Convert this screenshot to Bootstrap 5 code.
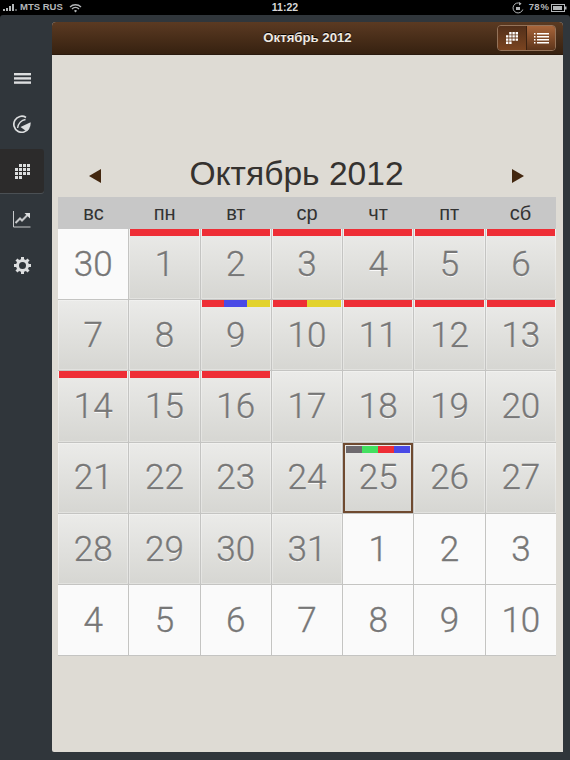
<!DOCTYPE html>
<html lang="ru">
<head>
  <meta charset="UTF-8">
  <meta name="viewport" content="width=device-width, initial-scale=1.0">
  <title>Календарь</title>
  <link href="https://cdn.jsdelivr.net/npm/bootstrap@5.3.0/dist/css/bootstrap.min.css" rel="stylesheet">
  <style>
    html, body { height: 760px; overflow: hidden; }
    body { background: #000; font-family: "Liberation Sans", Arial, sans-serif; }
    .status-bar { height: 15px; padding: 0 3px; color: #b4b7b9; font-size: 9.5px; font-weight: 700; background: #000; }
    .status-side { width: 200px; }
    .status-carrier { margin-left: 2px; }
    .status-wifi { margin-left: 6px; }
    .status-time { color: #d8d8d8; font-size: 10.5px; }
    .status-pct { word-spacing: -1.5px; margin: 0 2px 0 5px; }
    .app-shell { height: 745px; background: #30363b; border-radius: 3px 3px 0 0; }
    .side-menu { width: 52px; padding-top: 40px; }
    .side-item { width: 44px; height: 46px; color: #dcdedf; }
    .side-item.is-active { background: #2c2b2b; border-radius: 0 3px 3px 0; box-shadow: 0 1px 0 #4b5054; height: 44px; margin: 2px 0 3px; }
    .main-panel { width: 511px; height: 730px; margin-top: 7px; background: #dedbd4; border-radius: 4px 4px 0 2px; overflow: hidden; }
    .panel-head { height: 33px; background: linear-gradient(#5b3a22, #362110); border-bottom: 1px solid #2a1a0e; position: relative; }
    .panel-title { color: #efe9e2; font-size: 13.2px; font-weight: 700; text-shadow: 0 -1px 0 #000; }
    .view-switch { position: absolute; right: 7px; top: 3px; width: 59px; height: 26px; border: 1px solid #94735a; border-radius: 4px; overflow: hidden; }
    .view-btn { flex: 1; }
    .view-btn.is-on { background: linear-gradient(#53301a, #7a4420); border-right: 1px solid #3a2110; }
    .view-btn.is-off { background: linear-gradient(#a9653a, #5d351b); }
    .month-row { height: 51px; margin-top: 91px; padding: 0 39px 0 37px; }
    .month-name { font-size: 33.6px; line-height: 1; color: #35322f; padding-right: 20px; margin-top: 4px; }
    .month-arrow { width: 0; height: 0; border-top: 7px solid transparent; border-bottom: 7px solid transparent; margin-top: 8px; }
    .month-arrow.back { border-right: 12px solid #43270f; }
    .month-arrow.next { border-left: 12px solid #43270f; }
    .cal-wrap { margin: 0 7px 0 6px; }
    .week-head { display: grid; grid-template-columns: repeat(7, 1fr); height: 32px; background: #c7c7c7; color: #333; font-size: 20px; }
    .cal-grid { display: grid; grid-template-columns: repeat(7, 1fr); grid-auto-rows: 70.2px; gap: 1px; background: #c4c4c2; border-bottom: 1px solid #c4c4c2; }
    .day { position: relative; color: #777; font-family: Roboto, "Liberation Sans", sans-serif; font-weight: 300; font-size: 35px; -webkit-text-stroke: .35px #777; text-shadow: 0 1px 0 #fff; background: linear-gradient(#ebebe9, #d6d6d2); padding-top: 2px; box-shadow: inset 0 0 0 1px rgba(255, 255, 255, .3); }
    .day.is-out { background: #fafafa; }
    .day.is-today { outline: 2px solid #6f4a30; outline-offset: -2px; z-index: 1; }
    .day-bar { position: absolute; left: 1px; right: 1px; top: 0; height: 7px; }
    .is-today .day-bar { left: 3px; right: 3px; top: 3px; }
    .day-bar i { flex: 1; }
    .c-red { background: #ee2e36; }
    .c-blue { background: #4a4ae6; }
    .c-yellow { background: #e2d22c; }
    .c-green { background: #43e060; }
    .c-gray { background: #6e6a6e; }
  </style>
</head>
<body>

  <div class="status-bar d-flex justify-content-between align-items-center">
    <div class="status-side d-flex align-items-center">
      <svg width="15" height="9" viewBox="0 0 15 9" fill="#b4b7b9"><rect x="0" y="6" width="2" height="2"/><rect x="3" y="5" width="2" height="3"/><rect x="6" y="3" width="2" height="5"/><rect x="9" y="1" width="2" height="7"/><rect x="12" y="6" width="2" height="2" opacity=".5"/></svg>
      <span class="status-carrier">MTS RUS</span>
      <svg class="status-wifi" width="13" height="10" viewBox="0 0 13 10" fill="none" stroke="#b4b7b9" stroke-width="1.4"><path d="M1 4a8 8 0 0 1 11 0M3 6a5 5 0 0 1 7 0"/><path d="M6.5 9.5 5 7.7a2.3 2.3 0 0 1 3 0z" fill="#b4b7b9" stroke="none"/></svg>
    </div>
    <span class="status-time">11:22</span>
    <div class="status-side d-flex align-items-center justify-content-end">
      <svg width="12" height="12" viewBox="0 0 12 12" fill="none" stroke="#b4b7b9" stroke-width="1"><path d="M10.8 7.5A5 5 0 1 1 8.5 1.6"/><path d="M7 0v3.4l2.6-1.7z" fill="#b4b7b9" stroke="none"/><rect x="4" y="5" width="4" height="3" fill="#b4b7b9" stroke="none"/></svg>
      <span class="status-pct">78 %</span>
      <svg width="16" height="8" viewBox="0 0 16 8"><rect x=".5" y=".5" width="13" height="7" fill="none" stroke="#b4b7b9"/><rect x="2" y="2" width="9" height="4" fill="#b4b7b9"/><rect x="14" y="2.5" width="1.5" height="3" fill="#b4b7b9"/></svg>
    </div>
  </div>

  <div class="app-shell d-flex">
    <nav class="side-menu flex-shrink-0">
      <div class="side-item d-flex align-items-center justify-content-center">
        <svg width="17" height="11" viewBox="0 0 17 11" fill="currentColor"><rect width="17" height="2.4"/><rect y="4.2" width="17" height="2.4"/><rect y="8.4" width="17" height="2.4"/></svg>
      </div>
      <div class="side-item d-flex align-items-center justify-content-center">
        <svg width="18" height="18" viewBox="0 0 18 18" fill="none" stroke="currentColor" stroke-width="1.7"><path d="M13 2.4A8 8 0 1 0 15.8 13.2"/><path d="M4.6 13C5 8.5 8.5 5 12.5 4.5" stroke-width="1.3"/><path d="M7.5 12 17.6 7.3A9 9 0 0 1 13 16Z" fill="currentColor" stroke="none"/></svg>
      </div>
      <div class="side-item is-active d-flex align-items-center justify-content-center">
        <svg width="15" height="15" viewBox="0 0 15 15" fill="#dcdedf" shape-rendering="crispEdges"><path d="M4 0h3v3H4zM8 0h3v3H8zM12 0h3v3h-3zM0 4h3v3H0zM4 4h3v3H4zM8 4h3v3H8zM12 4h3v3h-3zM0 8h3v3H0zM4 8h3v3H4zM8 8h3v3H8zM12 8h3v3h-3zM0 12h3v3H0zM4 12h3v3H4z"/></svg>
      </div>
      <div class="side-item d-flex align-items-center justify-content-center">
        <svg width="18" height="17" viewBox="0 0 18 17" fill="none" stroke="#c7c9cb"><path d="M.5 0v16h17" stroke-width="1"/><path d="M2.5 12 7 7.5l2 2L14.5 4" stroke-width="2"/><path d="M11.5 2H17v5.5z" fill="#dcdedf" stroke="none"/></svg>
      </div>
      <div class="side-item d-flex align-items-center justify-content-center">
        <svg width="17" height="17" viewBox="0 0 17 17"><circle cx="8.5" cy="8.5" r="5" fill="none" stroke="#dcdedf" stroke-width="3"/><g stroke="#dcdedf" stroke-width="3"><path d="M8.5 0v3M8.5 14v3M0 8.5h3M14 8.5h3M2.5 2.5l2 2M12.5 12.5l2 2M2.5 14.5l2-2M12.5 4.5l2-2"/></g></svg>
      </div>
    </nav>

    <main class="main-panel">
      <header class="panel-head d-flex align-items-center justify-content-center">
        <span class="panel-title">Октябрь 2012</span>
        <div class="view-switch d-flex">
          <div class="view-btn is-on d-flex align-items-center justify-content-center">
            <svg width="12" height="12" viewBox="0 0 15 15" fill="#fff"><path d="M4 0h3v3H4zM8 0h3v3H8zM12 0h3v3h-3zM0 4h3v3H0zM4 4h3v3H4zM8 4h3v3H8zM12 4h3v3h-3zM0 8h3v3H0zM4 8h3v3H4zM8 8h3v3H8zM12 8h3v3h-3zM0 12h3v3H0zM4 12h3v3H4z"/></svg>
          </div>
          <div class="view-btn is-off d-flex align-items-center justify-content-center">
            <svg width="15" height="11" viewBox="0 0 15 11" fill="#fff"><path d="M0 0h1.5v1.5H0zM3 0h12v1.5H3zM0 3h1.5v1.5H0zM3 3h12v1.5H3zM0 6h1.5v1.5H0zM3 6h12v1.5H3zM0 9h1.5v1.5H0zM3 9h12v1.5H3z"/></svg>
          </div>
        </div>
      </header>

      <div class="month-row d-flex align-items-center justify-content-between">
        <span class="month-arrow back"></span>
        <span class="month-name">Октябрь 2012</span>
        <span class="month-arrow next"></span>
      </div>

      <div class="cal-wrap">
        <div class="week-head text-center align-items-center">
          <span>вс</span><span>пн</span><span>вт</span><span>ср</span><span>чт</span><span>пт</span><span>сб</span>
        </div>
        <div class="cal-grid">
          <div class="day is-out d-flex align-items-center justify-content-center">30</div>
          <div class="day d-flex align-items-center justify-content-center"><span class="day-bar d-flex"><i class="c-red"></i></span>1</div>
          <div class="day d-flex align-items-center justify-content-center"><span class="day-bar d-flex"><i class="c-red"></i></span>2</div>
          <div class="day d-flex align-items-center justify-content-center"><span class="day-bar d-flex"><i class="c-red"></i></span>3</div>
          <div class="day d-flex align-items-center justify-content-center"><span class="day-bar d-flex"><i class="c-red"></i></span>4</div>
          <div class="day d-flex align-items-center justify-content-center"><span class="day-bar d-flex"><i class="c-red"></i></span>5</div>
          <div class="day d-flex align-items-center justify-content-center"><span class="day-bar d-flex"><i class="c-red"></i></span>6</div>

          <div class="day d-flex align-items-center justify-content-center">7</div>
          <div class="day d-flex align-items-center justify-content-center">8</div>
          <div class="day d-flex align-items-center justify-content-center"><span class="day-bar d-flex"><i class="c-red"></i><i class="c-blue"></i><i class="c-yellow"></i></span>9</div>
          <div class="day d-flex align-items-center justify-content-center"><span class="day-bar d-flex"><i class="c-red"></i><i class="c-yellow"></i></span>10</div>
          <div class="day d-flex align-items-center justify-content-center"><span class="day-bar d-flex"><i class="c-red"></i></span>11</div>
          <div class="day d-flex align-items-center justify-content-center"><span class="day-bar d-flex"><i class="c-red"></i></span>12</div>
          <div class="day d-flex align-items-center justify-content-center"><span class="day-bar d-flex"><i class="c-red"></i></span>13</div>

          <div class="day d-flex align-items-center justify-content-center"><span class="day-bar d-flex"><i class="c-red"></i></span>14</div>
          <div class="day d-flex align-items-center justify-content-center"><span class="day-bar d-flex"><i class="c-red"></i></span>15</div>
          <div class="day d-flex align-items-center justify-content-center"><span class="day-bar d-flex"><i class="c-red"></i></span>16</div>
          <div class="day d-flex align-items-center justify-content-center">17</div>
          <div class="day d-flex align-items-center justify-content-center">18</div>
          <div class="day d-flex align-items-center justify-content-center">19</div>
          <div class="day d-flex align-items-center justify-content-center">20</div>

          <div class="day d-flex align-items-center justify-content-center">21</div>
          <div class="day d-flex align-items-center justify-content-center">22</div>
          <div class="day d-flex align-items-center justify-content-center">23</div>
          <div class="day d-flex align-items-center justify-content-center">24</div>
          <div class="day is-today d-flex align-items-center justify-content-center"><span class="day-bar d-flex"><i class="c-gray"></i><i class="c-green"></i><i class="c-red"></i><i class="c-blue"></i></span>25</div>
          <div class="day d-flex align-items-center justify-content-center">26</div>
          <div class="day d-flex align-items-center justify-content-center">27</div>

          <div class="day d-flex align-items-center justify-content-center">28</div>
          <div class="day d-flex align-items-center justify-content-center">29</div>
          <div class="day d-flex align-items-center justify-content-center">30</div>
          <div class="day d-flex align-items-center justify-content-center">31</div>
          <div class="day is-out d-flex align-items-center justify-content-center">1</div>
          <div class="day is-out d-flex align-items-center justify-content-center">2</div>
          <div class="day is-out d-flex align-items-center justify-content-center">3</div>

          <div class="day is-out d-flex align-items-center justify-content-center">4</div>
          <div class="day is-out d-flex align-items-center justify-content-center">5</div>
          <div class="day is-out d-flex align-items-center justify-content-center">6</div>
          <div class="day is-out d-flex align-items-center justify-content-center">7</div>
          <div class="day is-out d-flex align-items-center justify-content-center">8</div>
          <div class="day is-out d-flex align-items-center justify-content-center">9</div>
          <div class="day is-out d-flex align-items-center justify-content-center">10</div>
        </div>
      </div>
    </main>
  </div>

  <script src="https://cdn.jsdelivr.net/npm/bootstrap@5.3.0/dist/js/bootstrap.bundle.min.js"></script>
</body>
</html>
